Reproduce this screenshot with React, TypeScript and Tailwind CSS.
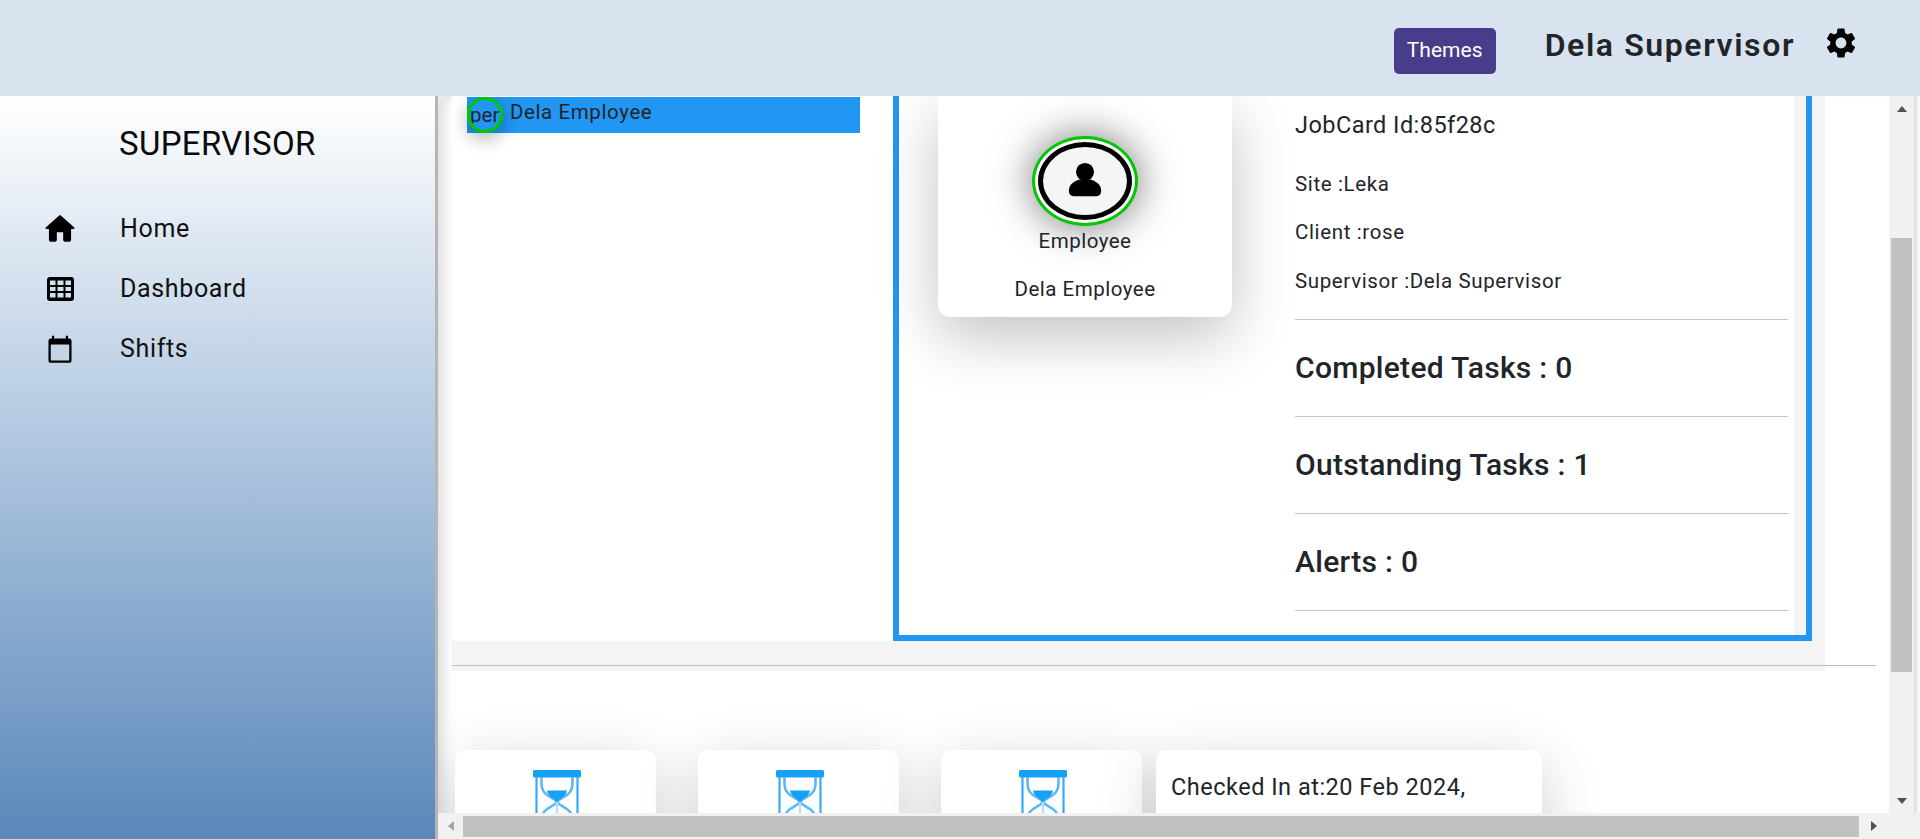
const font = { fontFamily: 'Roboto, sans-serif' };

function Hourglass() {
  return (
    <svg width="50" height="70" viewBox="0 0 50 70" fill="none" className="block ml-[2px]">
      <rect x="1" y="1" width="48" height="7.500" rx="1.500" fill="#16a0f7" />
      <path d="M4.500 8V70M45.500 8V70" stroke="#38abf8" strokeWidth="2.200" />
      <path d="M9.500 8V14C9.500 28 21 27 25 33C29 39 40.500 38 40.500 52V58" stroke="#58b9f9" strokeWidth="2.600" />
      <path d="M40.500 8V14C40.500 28 29 27 25 33C21 39 9.500 38 9.500 52V58" stroke="#58b9f9" strokeWidth="2.600" />
      <path d="M15 21.500H35C34 28 27 30 25 33C23 30 16 28 15 21.500Z" fill="#16a0f7" />
      <path d="M25 33V60" stroke="#b4defb" strokeWidth="2.400" />
    </svg>
  );
}

function NavRow({ label, icon }: { label: string; icon: React.ReactNode }) {
  return (
    <div className="flex items-center h-[60px]">
      <div className="w-[120px] flex justify-center">{icon}</div>
      <span className="text-[25px] tracking-[0.65px] text-[#111]">{label}</span>
    </div>
  );
}

function HourCard({ className }: { className: string }) {
  return (
    <div className={`w-[201px] h-[200px] bg-white rounded-[10px] shadow-[0_16px_60px_rgba(0,0,0,0.2)] flex justify-center pt-[19px] shrink-0 ${className}`}>
      <Hourglass />
    </div>
  );
}

function Divider() {
  return <div className="h-[1px] bg-[#c6c6c6] w-[493px]" />;
}

function Stat({ text }: { text: string }) {
  return (
    <>
      <div className="h-[96px] pb-[2px] flex items-center text-[30px] font-medium tracking-[0.3px] text-[#212529]">{text}</div>
      <Divider />
    </>
  );
}

export default function App() {
  return (
    <div className="w-[1920px] h-[839px] flex flex-col overflow-hidden bg-white" style={font}>
      <header className="h-[96px] shrink-0 bg-[#d9e3ef] flex justify-end pr-[61px]">
        <button className="mt-[28px] h-[46px] w-[102px] rounded-[5px] bg-[#483d8b] text-white text-[21px]">Themes</button>
        <div className="ml-[49px] mt-[24px] text-[32px] leading-[42px] font-semibold tracking-[1.6px] text-[#212529]">Dela Supervisor</div>
        <svg className="ml-[28px] mt-[25px]" width="36" height="36" viewBox="0 0 24 24" fill="#000">
          <path d="M19.14 12.94c.04-.3.06-.61.06-.94 0-.32-.02-.64-.07-.94l2.03-1.58a.49.49 0 0 0 .12-.61l-1.92-3.32a.488.488 0 0 0-.59-.22l-2.39.96c-.5-.38-1.03-.7-1.62-.94l-.36-2.54a.484.484 0 0 0-.48-.41h-3.84c-.24 0-.43.17-.47.41l-.36 2.54c-.59.24-1.13.57-1.62.94l-2.39-.96c-.22-.08-.47 0-.59.22L2.74 8.87c-.12.21-.08.47.12.61l2.03 1.58c-.05.3-.09.63-.09.94s.02.64.07.94l-2.03 1.58a.49.49 0 0 0-.12.61l1.92 3.32c.12.22.37.29.59.22l2.39-.96c.5.38 1.03.7 1.62.94l.36 2.54c.05.24.24.41.48.41h3.84c.24 0 .44-.17.47-.41l.36-2.54c.59-.24 1.13-.56 1.62-.94l2.39.96c.22.08.47 0 .59-.22l1.92-3.32c.12-.22.07-.47-.12-.61l-2.01-1.58zM12 15.6c-1.98 0-3.6-1.62-3.6-3.6s1.62-3.6 3.6-3.6 3.6 1.62 3.6 3.6-1.62 3.6-3.6 3.6z" />
        </svg>
      </header>

      <div className="flex flex-1 min-h-0">
        <aside className="w-[438px] shrink-0 border-r-[3px] border-[#b5b5b5] bg-gradient-to-b from-white to-[#5a88ba]">
          <div className="pl-[119px] pt-[28px] text-[33px] leading-[40px] font-normal text-[#0a0a0a] tracking-[0.35px]">SUPERVISOR</div>
          <div className="mt-[35px]">
            <NavRow
              label="Home"
              icon={
                <svg width="38" height="38" viewBox="0 0 24 24" fill="#000">
                  <path d="M10 19v-5h4v5c0 .55.45 1 1 1h3c.55 0 1-.45 1-1v-7h1.700c.46 0 .68-.57.33-.87L12.670 3.600c-.38-.34-.96-.34-1.340 0l-8.360 7.530c-.34.3-.13.87.33.87H5v7c0 .55.45 1 1 1h3c.55 0 1-.45 1-1z" />
                </svg>
              }
            />
            <NavRow
              label="Dashboard"
              icon={
                <svg width="27" height="24" viewBox="0 0 27 24" fill="#000">
                  <path fillRule="evenodd" d="M3 0h21a3 3 0 0 1 3 3v18a3 3 0 0 1-3 3H3a3 3 0 0 1-3-3V3a3 3 0 0 1 3-3zM3 3.500v4.500h5.500V3.500zM10.500 3.500v4.500h6V3.500zM18.500 3.500v4.500h5.500V3.500zM3 10v4h5.500v-4zM10.500 10v4h6v-4zM18.500 10v4h5.500v-4zM3 16v4.500h5.500V16zM10.500 16v4.500h6V16zM18.500 16v4.500h5.500V16z" />
                </svg>
              }
            />
            <NavRow
              label="Shifts"
              icon={
                <svg width="28" height="30" viewBox="0 0 24 26" fill="#000">
                  <path d="M20 4h-1V1.500h-2V4H7V1.500H5V4H4C2.900 4 2 4.900 2 6v17c0 1.100.9 2 2 2h16c1.100 0 2-.9 2-2V6c0-1.100-.9-2-2-2zm0 19H4V9h16v14z" />
                </svg>
              }
            />
          </div>
        </aside>

        <main className="flex-1 min-w-0 flex flex-col bg-[#e8e8e8]">
          <div className="flex flex-1 min-h-0">
            <div className="relative flex-1 min-w-0 overflow-hidden rounded-tl-[16px] bg-white shadow-[inset_14px_0_12px_-8px_rgba(0,0,0,0.13)]">
              <div className="pl-[14px] w-[1451px]">
                <div className="w-[1373px] h-[545px] flex bg-[#f4f4f4]">
                  <div className="w-[441px] h-full bg-white pl-[15px] pt-[1px] shrink-0">
                    <div className="w-[393px] h-[36px] bg-[#2196f3] flex items-center text-[20.500px] text-[#212529]">
                      <div className="w-[36px] h-[36px] rounded-full border-[3px] border-[#00c800] shadow-[0_6px_18px_rgba(0,0,0,0.3)] flex items-center overflow-hidden shrink-0 pt-[1px]">per</div>
                      <span className="ml-[7px] tracking-[0.6px] -mt-[5px]">Dela Employee</span>
                    </div>
                  </div>
                  <div className="w-[919px] h-full border-x-[6px] border-b-[6px] border-[#2196f3] shrink-0 flex">
                    <div className="w-[895px] h-full bg-white flex pl-[39px] shrink-0">
                      <div className="w-[294px] h-[221px] bg-white rounded-b-[12px] shadow-[0_20px_60px_rgba(0,0,0,0.24)] flex flex-col items-center pt-[40px] shrink-0 text-[20.500px] tracking-[0.5px] text-[#212529]">
                        <div className="w-[106px] h-[90px] rounded-[50%] border-[3px] border-[#00c800] bg-white p-[3px] shadow-[0_0_40px_rgba(0,0,0,0.55)] shrink-0">
                          <div className="w-full h-full rounded-[50%] border-[5px] border-black bg-[#f5f5f5] flex items-center justify-center">
                            <svg width="38" height="38" viewBox="0 0 40 40" fill="#000">
                              <circle cx="20" cy="10.500" r="9.500" />
                              <path d="M3 30C3 23 11 18 20 18s17 5 17 12c0 4-2 6-5 6H8c-3 0-5-2-5-6z" />
                            </svg>
                          </div>
                        </div>
                        <div className="mt-[1px] leading-[28px]">Employee</div>
                        <div className="mt-[20px] leading-[28px]">Dela Employee</div>
                      </div>
                      <div className="ml-[63px] w-[493px] shrink-0 text-[#212529]">
                        <div className="h-[56px] mt-[2px] flex items-center text-[23.500px] tracking-[0.45px]">JobCard Id:85f28c</div>
                        <div className="h-[48px] mt-[6px] flex items-center text-[20.500px] tracking-[0.63px]">Site :Leka</div>
                        <div className="h-[48px] flex items-center text-[20.500px] tracking-[0.63px]">Client :rose</div>
                        <div className="h-[50px] flex items-center text-[20.500px] tracking-[0.63px]">Supervisor :Dela Supervisor</div>
                        <div className="mt-[13px]"><Divider /></div>
                        <Stat text="Completed Tasks : 0" />
                        <Stat text="Outstanding Tasks : 1" />
                        <Stat text="Alerts : 0" />
                      </div>
                    </div>
                  </div>
                </div>
                <div className="w-[1373px] h-[30px] bg-[#f4f4f4] pt-[24px]">
                  <div className="w-[1424px] h-[1px] bg-[#bdbdbd]" />
                </div>
                <div className="flex mt-[79px] pl-[3px]">
                  <HourCard className="" />
                  <HourCard className="ml-[42px]" />
                  <HourCard className="ml-[42px]" />
                  <div className="ml-[14px] w-[386px] h-[200px] bg-white rounded-[10px] shadow-[0_16px_60px_rgba(0,0,0,0.2)] pl-[15px] pt-[21px] text-[23.500px] leading-[32px] tracking-[0.5px] text-[#212529] shrink-0">
                    Checked In at:20 Feb 2024,
                  </div>
                </div>
              </div>
            </div>
            <div className="w-[25px] shrink-0 bg-[#f1f1f1] flex flex-col items-center relative">
              <svg className="mt-[9px]" width="12" height="8" viewBox="0 0 12 8" fill="#505050"><path d="M6 1l5 6H1z" /></svg>
              <div className="mt-[125px] w-[21px] h-[434px] bg-[#c1c1c1]" />
              <div className="flex-1" />
              <svg className="mb-[8px]" width="12" height="8" viewBox="0 0 12 8" fill="#505050"><path d="M6 7L1 1h10z" /></svg>
            </div>
            <div className="w-[6px] shrink-0 bg-gradient-to-r from-[#dcdcdc] to-white" />
          </div>
          <div className="h-[26px] shrink-0 bg-[#f1f1f1] flex items-center">
            <div className="w-[25px] flex justify-center">
              <svg width="8" height="12" viewBox="0 0 8 12" fill="#a3a3a3"><path d="M1 6l6-5v10z" /></svg>
            </div>
            <div className="w-[1396px] h-[21px] bg-[#c1c1c1]" />
            <div className="w-[30px] flex justify-center">
              <svg width="8" height="12" viewBox="0 0 8 12" fill="#505050"><path d="M7 6L1 1v10z" /></svg>
            </div>
          </div>
        </main>
      </div>
    </div>
  );
}
